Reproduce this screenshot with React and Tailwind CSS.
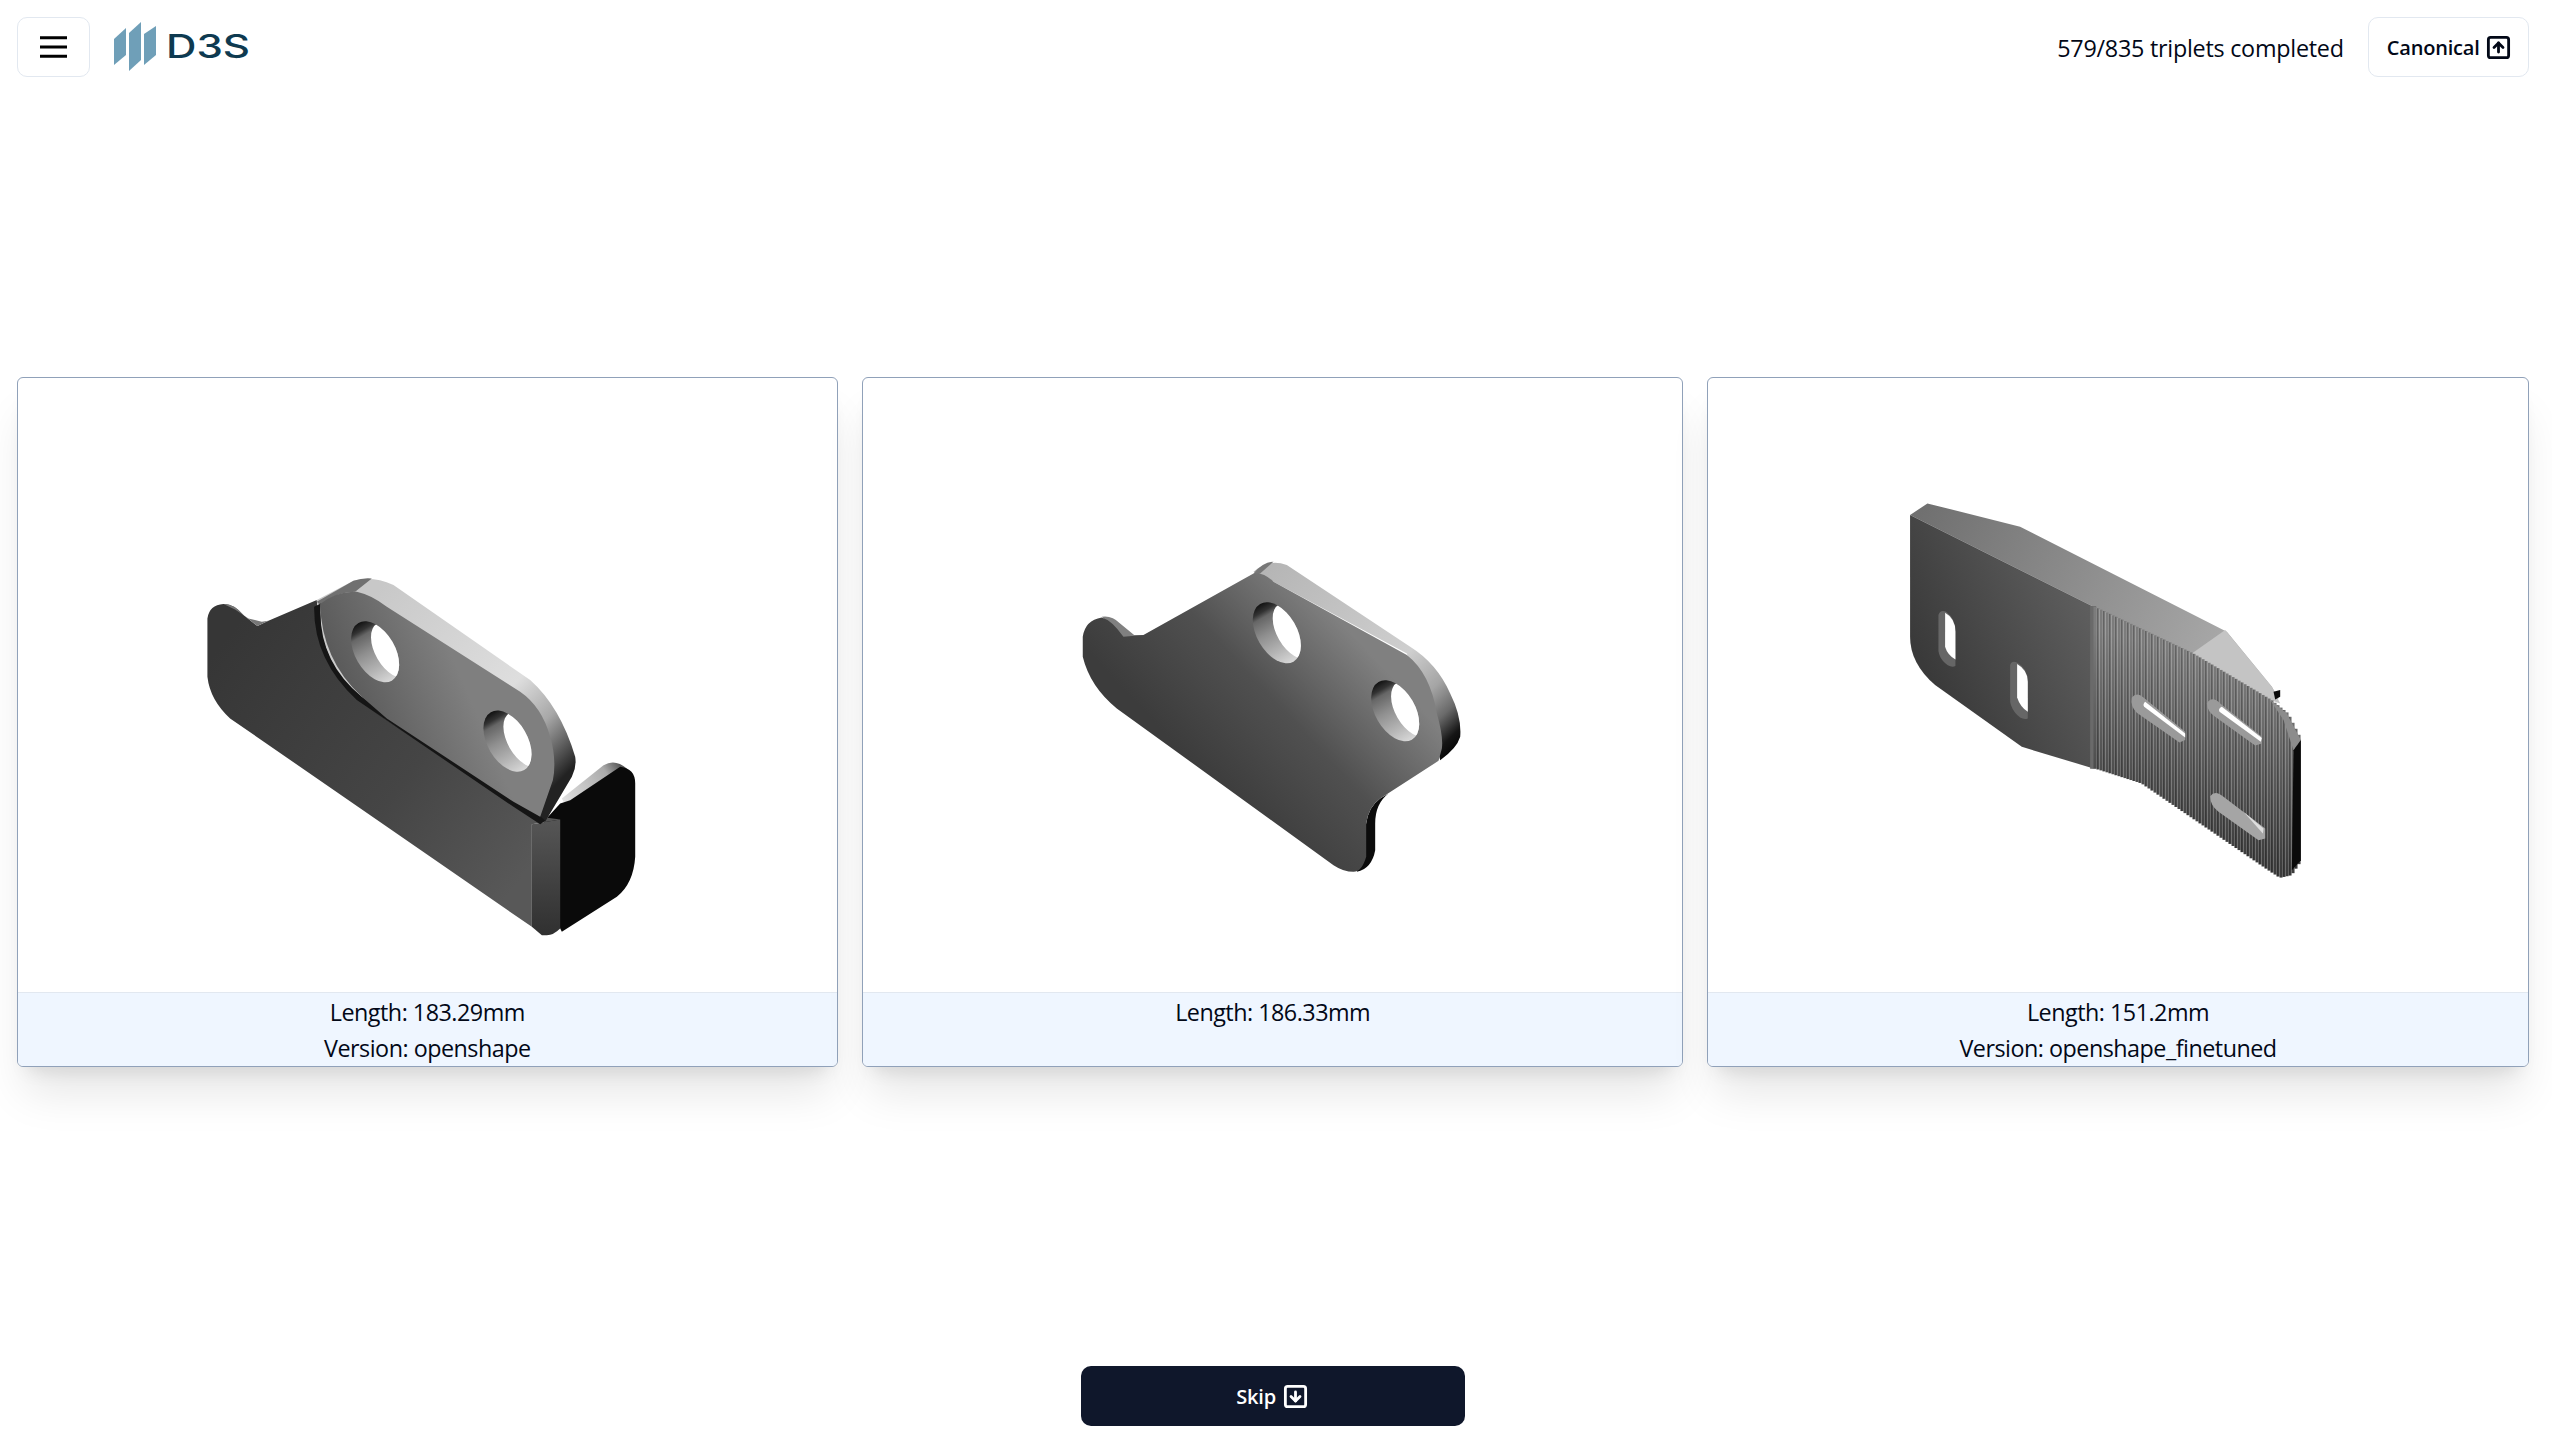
import { SquareArrowUp, SquareArrowDown } from "lucide-react";

function HoleShape({ id, cx, cy }) {
  return (
    <g>
      <clipPath id={id}>
        <ellipse cx={cx} cy={cy} rx="60" ry="100" transform={`rotate(-30 ${cx} ${cy})`} />
      </clipPath>
      <ellipse cx={cx} cy={cy} rx="60" ry="100" transform={`rotate(-30 ${cx} ${cy})`} fill={`url(#${id}w)`} />
      <linearGradient id={`${id}w`} x1="0" y1="0" x2="0" y2="1">
        <stop offset="0" stopColor="#111" />
        <stop offset="0.12" stopColor="#333" />
        <stop offset="0.2" stopColor="#666" />
        <stop offset="0.45" stopColor="#8f8f8f" />
        <stop offset="0.75" stopColor="#b5b5b5" />
        <stop offset="1" stopColor="#d8d8d8" />
      </linearGradient>
      <g clipPath={`url(#${id})`}>
        <ellipse cx={cx + 52} cy={cy - 5} rx="52" ry="92" transform={`rotate(-30 ${cx + 52} ${cy - 5})`} fill="#fff" />
      </g>
    </g>
  );
}

function PartOne() {
  return (
    <svg viewBox="0 0 819 614" className="block h-full w-full">
      <defs>
        <linearGradient id="p1body" gradientUnits="userSpaceOnUse" x1="150" y1="250" x2="1050" y2="950">
          <stop offset="0" stopColor="#363636" />
          <stop offset="0.6" stopColor="#454545" />
          <stop offset="1" stopColor="#585858" />
        </linearGradient>
        <linearGradient id="p1face" gradientUnits="userSpaceOnUse" x1="450" y1="430" x2="800" y2="280">
          <stop offset="0" stopColor="#555" />
          <stop offset="1" stopColor="#7f7f7f" />
        </linearGradient>
        <linearGradient id="p1band" gradientUnits="userSpaceOnUse" x1="620" y1="90" x2="1180" y2="650">
          <stop offset="0" stopColor="#c8c8c8" />
          <stop offset="0.62" stopColor="#dedede" />
          <stop offset="0.8" stopColor="#a8a8a8" />
          <stop offset="0.9" stopColor="#666" />
          <stop offset="1" stopColor="#222" />
        </linearGradient>
        <linearGradient id="p1fold" x1="0" y1="0" x2="0" y2="1">
          <stop offset="0" stopColor="#565656" />
          <stop offset="1" stopColor="#303030" />
        </linearGradient>
        <linearGradient id="p1tab" gradientUnits="userSpaceOnUse" x1="1150" y1="750" x2="1320" y2="640">
          <stop offset="0" stopColor="#e0e0e0" />
          <stop offset="0.75" stopColor="#aaa" />
          <stop offset="1" stopColor="#555" />
        </linearGradient>
      </defs>
      <g transform="translate(162 172) scale(0.3333)">
        <path d="M1145 745 L1270 645 Q1305 625 1340 655 L1170 760 L1150 755 Z" fill="url(#p1tab)" />
        <path d="M1090 815 L1140 760 L1170 750 L1320 650 Q1365 655 1365 700 L1365 920 Q1360 1000 1310 1040 L1145 1145 L1140 1135 Z" fill="#0a0a0a" />
        <path d="M82 205 Q88 165 130 162 Q160 160 190 195 L232 228 L265 212 L410 150 Q418 330 540 445 L1080 800 L1140 808 L1055 822 L1055 1130 L150 505 Q90 450 82 380 Z" fill="url(#p1body)" />
        <path d="M1055 822 L1140 808 L1140 1135 Q1120 1155 1100 1155 L1085 1155 L1055 1130 Z" fill="url(#p1fold)" />
        <path d="M130 162 Q160 160 190 195 L232 228 L265 212 L245 215 L205 205 L165 178 Z" fill="#777" />
        <path d="M410 150 L520 92 Q575 75 640 105 L1050 390 Q1140 470 1185 620 Q1190 650 1175 680 L1095 815 L1078 800 L1000 760 L620 510 L530 445 Q420 330 410 150 Z" fill="url(#p1band)" />
        <path d="M410 155 L520 92 Q550 82 575 85 L525 125 Q470 125 420 165 Z" fill="#707070" />
        <path d="M402 170 L422 160 Q410 330 545 440 L1078 796 L1095 812 L1080 822 L1000 770 L530 450 Q400 330 402 170 Z" fill="#151515" />
        <path d="M420 162 Q470 122 530 125 Q575 135 620 170 L1020 425 Q1085 470 1110 560 Q1130 630 1118 690 L1080 800 L1000 755 L620 505 L545 440 Q425 330 420 162 Z" fill="url(#p1face)" />
        <HoleShape id="p1h1" cx={585} cy={305} />
        <HoleShape id="p1h2" cx={982} cy={573} />
      </g>
    </svg>
  );
}

function PartTwo() {
  return (
    <svg viewBox="0 0 819 614" className="block h-full w-full">
      <defs>
        <linearGradient id="p2face" gradientUnits="userSpaceOnUse" x1="350" y1="620" x2="800" y2="200">
          <stop offset="0" stopColor="#3c3c3c" />
          <stop offset="0.5" stopColor="#505050" />
          <stop offset="1" stopColor="#808080" />
        </linearGradient>
        <linearGradient id="p2band" gradientUnits="userSpaceOnUse" x1="640" y1="60" x2="1190" y2="640">
          <stop offset="0" stopColor="#b5b5b5" />
          <stop offset="0.6" stopColor="#cfcfcf" />
          <stop offset="0.76" stopColor="#a5a5a5" />
          <stop offset="0.86" stopColor="#6a6a6a" />
          <stop offset="0.94" stopColor="#151515" />
          <stop offset="1" stopColor="#000" />
        </linearGradient>
      </defs>
      <g transform="translate(197 162) scale(0.3333)">
        <path d="M580 95 Q625 55 680 75 L1050 320 Q1130 370 1170 460 Q1205 530 1200 590 Q1190 625 1140 660 L1135 640 L1040 340 L640 125 Z" fill="url(#p2band)" />
        <path d="M580 100 Q610 65 640 65 L600 100 L590 105 Z" fill="#777" />
        <path d="M125 230 Q155 225 180 250 L222 285 L250 285 L235 298 L190 295 L150 255 Z" fill="#808080" />
        <path d="M918 850 Q925 800 960 775 L985 760 Q945 790 945 850 L945 930 Q935 985 890 995 Z" fill="#0c0c0c" />
        <path d="M68 290 Q75 240 125 232 Q155 240 190 290 L250 285 L580 100 Q610 95 640 125 L1040 345 Q1110 400 1130 520 Q1150 590 1145 625 L1135 662 L960 775 Q925 800 918 850 L918 950 Q905 995 880 995 Q850 995 820 975 L170 505 Q90 440 68 350 Z" fill="url(#p2face)" />
        <HoleShape id="p2h1" cx={650} cy={278} />
        <HoleShape id="p2h2" cx={1005} cy={512} />
      </g>
    </svg>
  );
}

// top and bottom edge of the ribbed half of the third part, as [x, y] runs
const ribTop = [[610, 350], [905, 490], [1140, 630], [1190, 670], [1230, 750]];
const ribBottom = [[610, 835], [750, 880], [1130, 1140], [1165, 1163], [1200, 1155], [1230, 1110]];

function edgeY(points, x) {
  for (let i = 1; i < points.length; i++) {
    const [x0, y0] = points[i - 1];
    const [x1, y1] = points[i];
    if (x <= x1) return y0 + ((y1 - y0) * (x - x0)) / (x1 - x0);
  }
  return points[points.length - 1][1];
}

const ribColumns = [];
for (let x = 610; x < 1230; x += 9) ribColumns.push(x);

function Slot({ wall, hole, wallFill = "#9a9a9a", holeFill = "#fff" }) {
  return (
    <g>
      <path d={wall} fill={wallFill} />
      <path d={hole} fill={holeFill} />
    </g>
  );
}

function PartThree() {
  return (
    <svg viewBox="0 0 819 614" className="block h-full w-full">
      <defs>
        <linearGradient id="p3left" gradientUnits="userSpaceOnUse" x1="120" y1="560" x2="600" y2="330">
          <stop offset="0" stopColor="#3a3a3a" />
          <stop offset="1" stopColor="#5f5f5f" />
        </linearGradient>
        <linearGradient id="p3top" gradientUnits="userSpaceOnUse" x1="100" y1="50" x2="1000" y2="480">
          <stop offset="0" stopColor="#707070" />
          <stop offset="1" stopColor="#a8a8a8" />
        </linearGradient>
        <linearGradient id="p3rib" gradientUnits="userSpaceOnUse" x1="1000" y1="520" x2="860" y2="1050">
          <stop offset="0" stopColor="#7c7c7c" />
          <stop offset="1" stopColor="#3c3c3c" />
        </linearGradient>
      </defs>
      <g transform="translate(182 112) scale(0.3333)">
        <path d="M60 75 L112 40 L390 110 L1010 425 L1145 590 L1165 625 L1140 630 L905 490 L610 350 Z" fill="url(#p3top)" />
        <path d="M905 490 L1005 420 L1145 590 L1170 640 L1140 630 Z" fill="#c4c4c4" />
        <path d="M1150 605 L1170 600 L1170 620 L1155 628 Z" fill="#0a0a0a" />
        <path d="M60 75 L610 350 L610 835 L395 770 L135 585 Q60 520 60 440 Z" fill="url(#p3left)" />
        <rect x="600" y="348" width="18" height="488" fill="#6a6a6a" />
        {ribColumns.map((x, i) => {
          const top = edgeY(ribTop, x);
          const bottom = edgeY(ribBottom, x);
          return (
            <g key={x}>
              <rect x={x} y={top} width="9" height={bottom - top} fill="url(#p3rib)" />
              {i % 2 === 1 && <rect x={x} y={top} width="5" height={bottom - top} fill="#000" opacity="0.2" />}
            </g>
          );
        })}
        <path d="M1140 630 L1190 670 L1232 750 L1210 780 L1180 690 Z" fill="#8c8c8c" />
        <path d="M1210 780 L1232 750 L1232 1110 L1205 1140 Z" fill="#0a0a0a" />
        <Slot wall="M145 375 Q150 358 168 365 Q196 385 196 425 L196 528 Q178 535 158 512 Q143 492 145 475 Z" hole="M165 368 Q196 385 196 425 L196 508 Q172 495 165 470 Z" wallFill="#666" />
        <Slot wall="M360 525 Q365 510 382 518 Q413 535 413 575 L413 685 Q395 692 375 668 Q358 645 360 625 Z" hole="M381 522 Q413 540 413 575 L413 665 Q390 650 381 622 Z" wallFill="#666" />
        <Slot wall="M725 622 Q740 605 760 622 L885 725 L885 750 L868 757 L740 668 Q720 648 725 622 Z" hole="M765 635 L885 730 L885 742 L762 650 Q757 642 765 635 Z" />
        <Slot wall="M950 640 Q965 615 990 640 L1115 740 L1115 760 L1095 766 L975 680 Q950 662 950 640 Z" hole="M995 650 L1115 744 L1112 755 L988 665 Q983 656 995 650 Z" />
        <Slot wall="M960 918 Q975 898 1000 920 L1125 1015 L1125 1045 L1105 1050 L985 965 Q960 945 960 918 Z" hole="M1060 965 L1120 1015 L1118 1030 Z" wallFill="#a5a5a5" holeFill="#dedede" />
      </g>
    </svg>
  );
}

function Logo() {
  return (
    <svg viewBox="0 0 140 50" className="h-[50px] w-[140px]">
      <path d="M1 17 L13 6 L13 33 L1 43 Z" fill="#6f9fb8" />
      <path d="M16 11 L28 0 L28 38 L16 49 Z" fill="#6f9fb8" />
      <path d="M31 12 L43 4 L43 33 L31 43 Z" fill="#6f9fb8" />
      <text x="53" y="36" fontFamily="Inter, sans-serif" fontWeight="500" fontSize="32" fill="#0e3a50" textLength="84" lengthAdjust="spacingAndGlyphs">
        D3S
      </text>
    </svg>
  );
}

function PartCard({ children, length, version }) {
  return (
    <div className="flex h-[690px] flex-1 flex-col overflow-hidden rounded-md border border-slate-400 bg-white shadow-[0_33px_42px_-8px_rgb(0_0_0/0.1),0_13px_17px_-10px_rgb(0_0_0/0.1)]">
      <div className="h-[615px]">{children}</div>
      <div className="h-[74px] border-t border-slate-200 bg-blue-50 pt-[1px] text-center text-[23.33px] leading-[36px] tracking-[-0.5px]">
        <p>Length: {length}</p>
        {version && <p>Version: {version}</p>}
      </div>
    </div>
  );
}

export default function App() {
  return (
    <div className="flex h-screen flex-col bg-white pl-[16.67px] pr-[23.33px] pt-[17px] pb-[19px] font-['Open_Sans',sans-serif] text-[#020817]">
      <header className="flex h-[60px] items-center justify-between">
        <div className="flex items-center gap-[23px]">
          <button className="flex h-[60px] w-[73px] items-center justify-center rounded-[10px] border border-slate-200">
            <svg viewBox="0 0 27 22" className="h-[22px] w-[27px]">
              <path d="M0 1.7H27M0 11H27M0 20.3H27" stroke="#000" strokeWidth="3" strokeLinecap="round" />
            </svg>
          </button>
          <Logo />
        </div>
        <div className="flex items-center gap-[24px]">
          <span className="pt-[2px] text-[23.33px] tracking-[-0.25px]">579/835 triplets completed</span>
          <button className="flex h-[60px] w-[161px] items-center justify-center gap-[5px] rounded-[10px] border border-slate-200 pl-[2px] text-[20px] font-semibold tracking-[-0.2px]">
            <span className="pt-[2px]">Canonical</span>
            <SquareArrowUp className="h-[27px] w-[27px]" strokeWidth={2.5} />
          </button>
        </div>
      </header>
      <main className="flex flex-1 items-center gap-6">
        <PartCard length="183.29mm" version="openshape">
          <PartOne />
        </PartCard>
        <PartCard length="186.33mm">
          <PartTwo />
        </PartCard>
        <PartCard length="151.2mm" version="openshape_finetuned">
          <PartThree />
        </PartCard>
      </main>
      <div className="flex justify-center">
        <button className="flex h-[60px] w-[384px] items-center justify-center gap-[6px] rounded-[10px] bg-slate-900 text-[20px] font-semibold tracking-[-0.2px] text-white">
          <span className="pt-[2px]">Skip</span>
          <SquareArrowDown className="h-[27px] w-[27px]" strokeWidth={2.5} />
        </button>
      </div>
    </div>
  );
}
